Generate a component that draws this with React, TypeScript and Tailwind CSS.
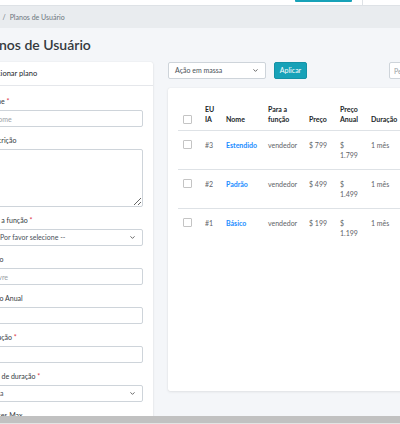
import { ChevronDown } from "lucide-react";

const plans = [
  { id: "#3", name: "Estendido", role: "vendedor", price: "$ 799", annual: "1.799", duration: "1 mês" },
  { id: "#2", name: "Padrão", role: "vendedor", price: "$ 499", annual: "1.499", duration: "1 mês" },
  { id: "#1", name: "Básico", role: "vendedor", price: "$ 199", annual: "1.199", duration: "1 mês" },
];

function Box() {
  return <span className="block w-[9px] h-[9px] border border-[#c4c4c4] rounded-[1px] bg-white" />;
}

function Label({ text, required }: { text: string; required?: boolean }) {
  return (
    <label className="block h-[10px] leading-[10px] text-[7px] text-[#343a40] mb-[4px]">
      {text}
      {required && <span className="text-[#dc3545]"> *</span>}
    </label>
  );
}

function Input({ placeholder }: { placeholder?: string }) {
  return (
    <input
      placeholder={placeholder}
      className="block w-full h-[17px] border border-[#ced4da] rounded-[2px] px-[6px] text-[7px] text-[#495057] placeholder:text-[#9aa0a6] bg-white outline-none"
    />
  );
}

function Select({ text }: { text: string }) {
  return (
    <div className="flex items-center justify-between w-full h-[17px] border border-[#ced4da] rounded-[2px] px-[6px] text-[7px] text-[#495057] bg-white">
      <span>{text}</span>
      <ChevronDown size={7} strokeWidth={3} className="text-[#555]" />
    </div>
  );
}

export default function App() {
  return (
    <div className="h-[424px] w-[400px] overflow-hidden bg-[#f4f6f9] flex flex-col font-['Lato',sans-serif]">
      {/* navbar bottom edge */}
      <div className="h-[6px] shrink-0 bg-white border-b border-[#dee2e6] flex items-start justify-end">
        <div className="w-[57px] h-[2px] bg-[#17a2b8] rounded-b-[1px] mr-[10px]" />
        <div className="w-[38px] h-full border-l border-[#dee2e6]" />
      </div>

      {/* breadcrumb */}
      <div className="h-[22px] shrink-0 bg-[#e9ecef] flex items-center text-[7px] text-[#6c757d] -ml-[18px]">
        <span className="text-[#1a8cff]">Início</span>
        <span className="px-[4px]">/</span>
        <span>Planos de Usuário</span>
      </div>

      <main className="flex-1 overflow-hidden -ml-[24px]">
        <h1 className="mt-[8px] mb-[9px] ml-[4px] text-[14px] leading-[17px] font-semibold text-[#343a40]">Planos de Usuário</h1>

        <div className="flex gap-[15px] items-start">
          {/* add plan card */}
          <div className="w-[177px] shrink-0 bg-white rounded-[2px] shadow-[0_0_1px_rgba(0,0,0,0.13),0_1px_3px_rgba(0,0,0,0.08)]">
            <div className="h-[24px] flex items-center px-[10px] border-b border-[#e5e7eb] text-[7.5px] text-[#212529]">
              Adicionar plano
            </div>
            <div className="px-[10px] pt-[10px] flex flex-col gap-[8px]">
              <div>
                <Label text="Nome" required />
                <Input placeholder="Nome" />
              </div>
              <div>
                <Label text="Descrição" />
                <textarea className="block w-full h-[58px] border border-[#ced4da] rounded-[2px] bg-white outline-none" />
              </div>
              <div>
                <Label text="Para a função" required />
                <Select text="-- Por favor selecione --" />
              </div>
              <div>
                <Label text="Preço" />
                <Input placeholder="Livre" />
              </div>
              <div>
                <Label text="Preço Anual" />
                <Input />
              </div>
              <div>
                <Label text="Duração" required />
                <Input />
              </div>
              <div>
                <Label text="Tipo de duração" required />
                <Select text="Dia" />
              </div>
              <div>
                <Label text="Índices Max" />
                <Input />
              </div>
            </div>
          </div>

          {/* plans list */}
          <div className="w-[300px] shrink-0">
            <div className="flex items-center h-[17px]">
              <div className="w-[98px]">
                <Select text="Ação em massa" />
              </div>
              <button className="ml-[8px] w-[33px] h-[17px] rounded-[2px] bg-[#17a2b8] border border-[#1592a6] text-white text-[7px]">
                Aplicar
              </button>
              <input
                placeholder="Pesquisar"
                className="ml-auto w-[79px] h-[17px] border border-[#ced4da] rounded-[2px] px-[4px] text-[7px] placeholder:text-[#9aa0a6] bg-white outline-none"
              />
            </div>

            <div className="mt-[9px] h-[303px] bg-white rounded-[2px] shadow-[0_0_1px_rgba(0,0,0,0.13),0_1px_3px_rgba(0,0,0,0.08)] px-[10px] pt-[10px]">
              <table className="table-fixed border-collapse text-[7px] leading-[10px] w-[280px]">
                <thead>
                  <tr className="border-b border-[#dee2e6] text-[#212529] font-bold text-left align-bottom">
                    <th className="w-[23px] pl-[5px] pt-[6px] pb-[6px]">
                      <Box />
                    </th>
                    <th className="w-[21px] px-[4px] pt-[6px] pb-[6px]">EU<br />IA</th>
                    <th className="w-[42px] px-[4px] pt-[6px] pb-[6px]">Nome</th>
                    <th className="w-[41px] px-[4px] pt-[6px] pb-[6px]">Para a<br />função</th>
                    <th className="w-[31px] px-[4px] pt-[6px] pb-[6px]">Preço</th>
                    <th className="w-[31px] px-[4px] pt-[6px] pb-[6px]">Preço<br />Anual</th>
                    <th className="w-[45px] px-[4px] pt-[6px] pb-[6px]">Duração</th>
                    <th className="px-[4px] pt-[6px] pb-[6px]"></th>
                  </tr>
                </thead>
                <tbody className="text-[#5f6368]">
                  {plans.map((p, i) => (
                    <tr key={p.id} className={`align-top ${i > 0 ? "border-t border-[#dee2e6]" : ""}`}>
                      <td className="pl-[5px] py-[9px]">
                        <Box />
                      </td>
                      <td className="px-[4px] py-[9px]">{p.id}</td>
                      <td className="px-[4px] py-[9px] font-bold text-[#1a8cff]">{p.name}</td>
                      <td className="px-[4px] py-[9px]">{p.role}</td>
                      <td className="px-[4px] py-[9px]">{p.price}</td>
                      <td className="px-[4px] py-[9px]">$<br />{p.annual}</td>
                      <td className="px-[4px] py-[9px]">{p.duration}</td>
                      <td className="px-[4px] py-[9px]"></td>
                    </tr>
                  ))}
                </tbody>
              </table>
            </div>
          </div>
        </div>
      </main>

      {/* horizontal scrollbar */}
      <div className="h-[8px] shrink-0 bg-[#c1c1c1] border-b border-[#e4e4e4]" />
    </div>
  );
}
